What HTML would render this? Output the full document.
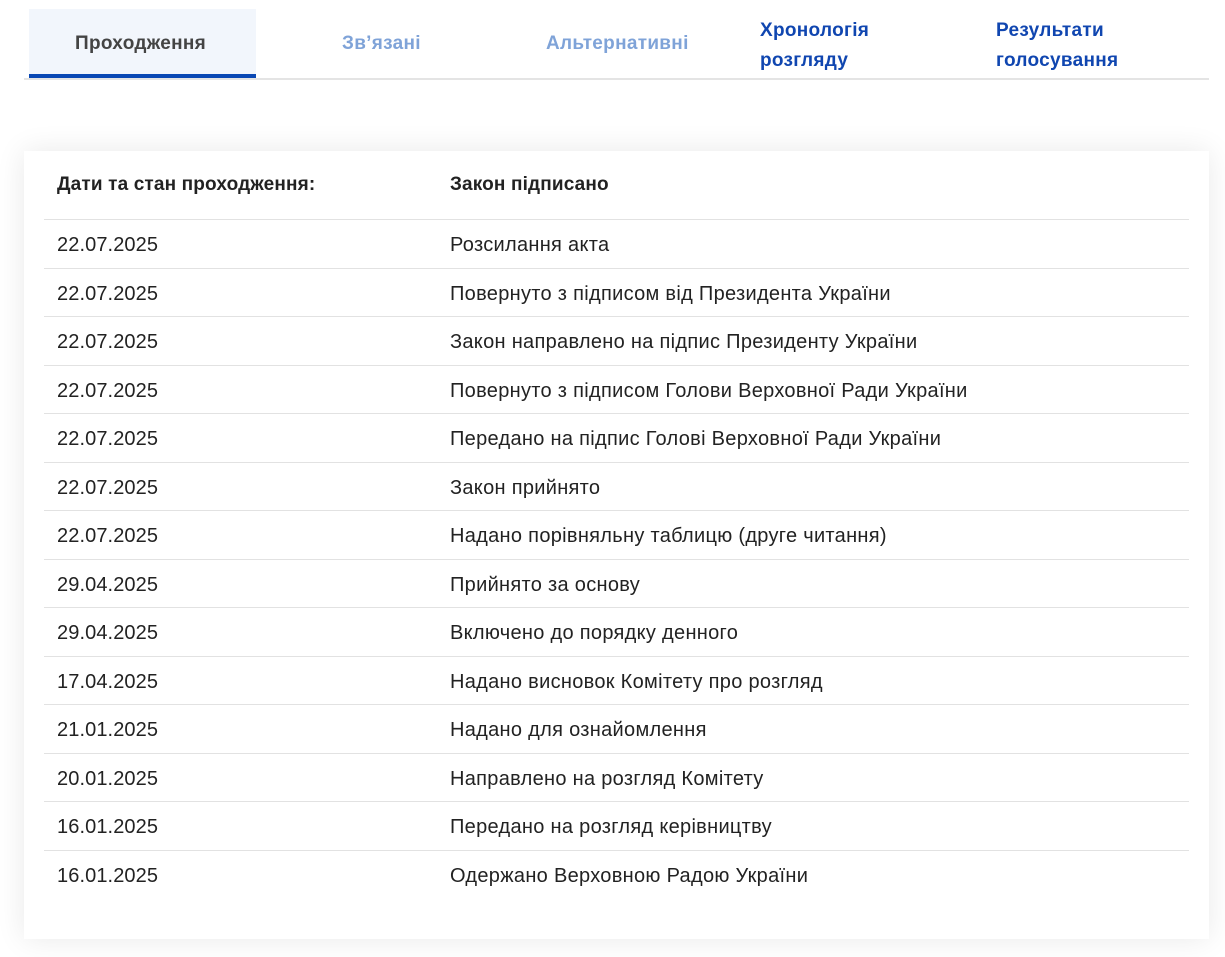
<!DOCTYPE html>
<html><head><meta charset="utf-8"><style>
body{margin:0;background:#fff;font-family:"Liberation Sans",sans-serif;width:1225px;height:957px;position:relative;overflow:hidden}
.bar{position:absolute;left:24px;top:78px;width:1185px;height:2px;background:#e4e4e4}
.act{position:absolute;left:29px;top:9px;width:227px;height:70px;background:#f2f6fc}
.act:after{content:"";position:absolute;left:0;bottom:0;width:227px;height:5px;background:#0a48b4}
.t{position:absolute;font-weight:bold;font-size:19px;line-height:30px;letter-spacing:0.3px}
.card{position:absolute;left:24px;top:151px;width:1185px;height:788px;background:#fff;box-shadow:0 0 28px rgba(0,0,0,0.09)}
.row{position:absolute;left:20px;width:1145px;height:48px;border-top:1.5px solid #e2e2e2;font-size:20px;color:#222}
.row span{position:absolute;top:14px}
.d{left:13px;letter-spacing:0.1px}.e{left:406px;letter-spacing:0.3px}
.h{position:absolute;top:23px;font-weight:bold;font-size:19px;color:#222;letter-spacing:0.15px}
</style></head><body>
<div class="act"></div><div class="bar"></div>
<div class="t" style="left:75px;top:29px;color:#444">Проходження</div>
<div class="t" style="left:342px;top:29px;color:#7fa3d8">Зв’язані</div>
<div class="t" style="left:546px;top:29px;color:#7fa3d8">Альтернативні</div>
<div class="t" style="left:760px;top:16px;color:#1046b0">Хронологія<br>розгляду</div>
<div class="t" style="left:996px;top:16px;color:#1046b0">Результати<br>голосування</div>
<div class="card">
<div class="h" style="left:33px">Дати та стан проходження:</div>
<div class="h" style="left:426px">Закон підписано</div>
<div class="row" style="top:68px"><span class="d">22.07.2025</span><span class="e">Розсилання акта</span></div>
<div class="row" style="top:117px"><span class="d">22.07.2025</span><span class="e">Повернуто з підписом від Президента України</span></div>
<div class="row" style="top:165px"><span class="d">22.07.2025</span><span class="e">Закон направлено на підпис Президенту України</span></div>
<div class="row" style="top:214px"><span class="d">22.07.2025</span><span class="e">Повернуто з підписом Голови Верховної Ради України</span></div>
<div class="row" style="top:262px"><span class="d">22.07.2025</span><span class="e">Передано на підпис Голові Верховної Ради України</span></div>
<div class="row" style="top:311px"><span class="d">22.07.2025</span><span class="e">Закон прийнято</span></div>
<div class="row" style="top:359px"><span class="d">22.07.2025</span><span class="e">Надано порівняльну таблицю (друге читання)</span></div>
<div class="row" style="top:408px"><span class="d">29.04.2025</span><span class="e">Прийнято за основу</span></div>
<div class="row" style="top:456px"><span class="d">29.04.2025</span><span class="e">Включено до порядку денного</span></div>
<div class="row" style="top:505px"><span class="d">17.04.2025</span><span class="e">Надано висновок Комітету про розгляд</span></div>
<div class="row" style="top:553px"><span class="d">21.01.2025</span><span class="e">Надано для ознайомлення</span></div>
<div class="row" style="top:602px"><span class="d">20.01.2025</span><span class="e">Направлено на розгляд Комітету</span></div>
<div class="row" style="top:650px"><span class="d">16.01.2025</span><span class="e">Передано на розгляд керівництву</span></div>
<div class="row" style="top:699px"><span class="d">16.01.2025</span><span class="e">Одержано Верховною Радою України</span></div>
</div>
</body></html>
